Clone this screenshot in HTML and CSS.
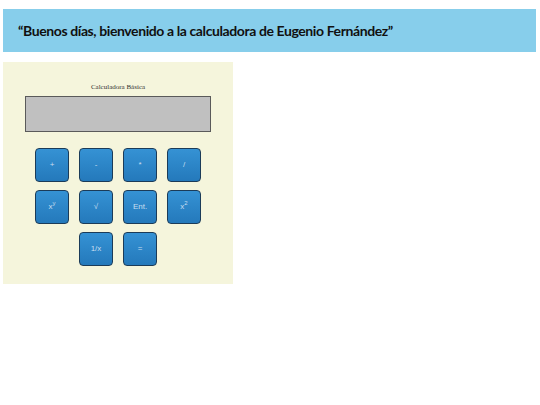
FILE: index.html
```html
<!DOCTYPE html>
<html lang="es">
<head>
<meta charset="utf-8">
<title>Calculadora</title>
<link rel="stylesheet" href="styles.css">
</head>
<body>
<header class="banner">
  <h1 class="greeting">“Buenos días, bienvenido a la calculadora de Eugenio Fernández”</h1>
</header>
<main class="calc">
  <p class="calc-title">Calculadora Básica</p>
  <div class="display"></div>
  <div class="keys">
    <button class="key">+</button>
    <button class="key">-</button>
    <button class="key">*</button>
    <button class="key">/</button>
    <button class="key">x<sup>y</sup></button>
    <button class="key">√</button>
    <button class="key">Ent.</button>
    <button class="key">x<sup>2</sup></button>
    <button class="key key-c2">1/x</button>
    <button class="key">=</button>
  </div>
</main>
</body>
</html>
```

FILE: styles.css
```css
html, body {
  margin: 0;
  padding: 0;
  background: #ffffff;
}

body {
  padding: 9px 4px 0 3px;
}

.banner {
  height: 43px;
  background: #87ceeb;
  display: flex;
  align-items: center;
  padding-left: 15px;
}

.greeting {
  margin: 0;
  font-family: "Lato", "Noto Sans", sans-serif;
  font-weight: 700;
  font-size: 14px;
  color: #111111;
  letter-spacing: -0.4px;
}

.calc {
  width: 230px;
  height: 222px;
  margin-top: 10px;
  background: #f5f5dc;
  box-sizing: border-box;
  padding-top: 20px;
  display: flex;
  flex-direction: column;
  align-items: center;
}

.calc-title {
  margin: 0;
  font-family: "Liberation Serif", serif;
  font-size: 7px;
  line-height: 10px;
  color: #333333;
}

.display {
  margin-top: 4px;
  width: 186px;
  height: 36px;
  box-sizing: border-box;
  background: #c0c0c0;
  border: 1px solid #5a5a5a;
}

.keys {
  margin-top: 16px;
  display: grid;
  grid-template-columns: repeat(4, 34px);
  grid-auto-rows: 34px;
  column-gap: 10px;
  row-gap: 8px;
}

.key {
  margin: 0;
  padding: 0;
  box-sizing: border-box;
  border: 1px solid #1b3b58;
  border-radius: 4px;
  background: linear-gradient(#3592d4, #2479bb);
  color: #c8def0;
  font-family: "Liberation Sans", Arial, sans-serif;
  font-size: 8px;
  line-height: 1;
  cursor: pointer;
}

.key sup {
  font-size: 6px;
  vertical-align: 4px;
  line-height: 0;
}

.key-c2 {
  grid-column: 2;
}
```
